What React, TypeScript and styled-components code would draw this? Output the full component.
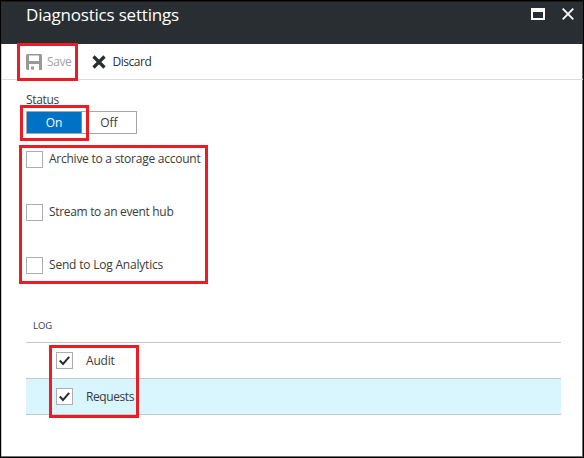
import React from 'react';
import styled, { createGlobalStyle } from 'styled-components';

const GlobalStyle = createGlobalStyle`
  *, *::before, *::after { box-sizing: border-box; }
  body { margin: 0; background: #fff; }
`;

const Blade = styled.div`
  display: flex;
  flex-direction: column;
  width: 584px;
  height: 458px;
  border: 1px solid #000;
  background: #fff;
  box-shadow: inset -1px -1px 0 #6e6f70, inset 1px 0 0 #c9c9c9;
  color: #3b3b3b;
  font: 12px/16px "Open Sans", "Noto Sans", sans-serif;
  white-space: nowrap;
`;

const Header = styled.header`
  display: flex;
  justify-content: space-between;
  flex: none;
  height: 43px;
  padding: 1px 9px 0 25px;
  background: #292e32;
  color: #fff;
  box-shadow: inset 0 1px 0 #17191b;
`;

const Title = styled.h1`
  margin: 0;
  font-size: 17px;
  line-height: 26px;
  font-weight: 400;
  letter-spacing: -0.2px;
`;

const WindowControls = styled.div`
  display: flex;
  gap: 17px;
  padding-top: 6px;
  svg { display: block; }
`;

const Toolbar = styled.div`
  display: flex;
  flex: none;
  gap: 21px;
  height: 36px;
  padding-left: 25px;
  border-bottom: 1px solid #dcdcdc;
`;

const Command = styled.div<{ $muted?: boolean; $gap: number }>`
  position: relative;
  display: flex;
  align-items: center;
  gap: ${p => p.$gap}px;
  color: ${p => (p.$muted ? '#a0a1a2' : '#2d3135')};
  svg { display: block; }
`;

const Highlight = styled.div<{ $inset: string }>`
  position: absolute;
  inset: ${p => p.$inset};
  border: 3px solid #ed1c24;
  pointer-events: none;
`;

const Label = styled.span<{ $spacing?: number }>`
  letter-spacing: ${p => p.$spacing ?? 0}px;
`;

const Content = styled.main`
  display: flex;
  flex-direction: column;
  padding: 12px 21px 0 25px;
`;

const StatusLabel = styled.div`
  height: 19px;
  letter-spacing: -0.35px;
`;

const Toggle = styled.div`
  position: relative;
  display: flex;
  width: 111px;
  height: 23px;
  border: 1px solid #a6a6a6;
`;

const ToggleOption = styled.div<{ $active?: boolean }>`
  width: ${p => (p.$active ? 55 : 54)}px;
  border-right: ${p => (p.$active ? '1px solid #8a8a8a' : 'none')};
  background: ${p => (p.$active ? '#0072c6' : '#fff')};
  color: ${p => (p.$active ? '#fff' : '#3b3b3b')};
  line-height: 22px;
  text-align: center;
`;

const Destinations = styled.div`
  position: relative;
  display: flex;
  flex-direction: column;
  align-self: flex-start;
  gap: 36px;
  width: 182px;
  margin-top: 17px;
`;

const Option = styled.label`
  display: flex;
  gap: 6px;
  height: 17px;
  line-height: 15px;
`;

const CheckBox = styled.span`
  display: flex;
  flex: none;
  width: 17px;
  height: 17px;
  border: 1px solid #adadad;
  background: #fff;
`;

const LogTable = styled.section`
  position: relative;
  display: flex;
  flex-direction: column;
  margin-top: 43px;
  width: 535px;
`;

const LogHeading = styled.div`
  height: 26px;
  padding-left: 7px;
  border-bottom: 1px solid #c8c8c8;
  font-size: 9.5px;
  line-height: 17px;
`;

const LogRow = styled.div<{ $selected?: boolean }>`
  display: flex;
  align-items: center;
  gap: 13px;
  height: 36px;
  padding-left: 30px;
  border-bottom: 1px solid #c8c8c8;
  background: ${p => (p.$selected ? '#d9f5fe' : '#fff')};
`;

const RowLabel = styled(Label)`
  padding-top: 1px;
`;

const SaveIcon = () => (
  <svg width="16" height="16" viewBox="0 0 16 16">
    <path
      fill="#97999b"
      fillRule="evenodd"
      d="M1 0H15L16 1V16H13V10H3V16H1L0 15V1ZM3 1.5V7H13V1.5ZM5 12.5H8V15.5H5Z"
    />
  </svg>
);

const DiscardIcon = () => (
  <svg width="14" height="14" viewBox="0 0 14 14">
    <path d="M1.5 1.5L12.5 12.5M12.5 1.5L1.5 12.5" stroke="#292e32" strokeWidth="3.2" />
  </svg>
);

const MaximizeIcon = () => (
  <svg width="14" height="12" viewBox="0 0 14 12">
    <path fill="#fff" fillRule="evenodd" d="M0 0H14V12H0ZM2 4V10H12V4Z" />
  </svg>
);

const CloseIcon = () => (
  <svg width="12" height="12" viewBox="0 0 12 12">
    <path d="M.7 .7L11.3 11.3M11.3 .7L.7 11.3" stroke="#fff" strokeWidth="1.8" />
  </svg>
);

const CheckMark = () => (
  <svg width="15" height="15" viewBox="0 0 15 15">
    <path d="M2.8 7.5L6 10.9L12.2 3.8" fill="none" stroke="#292e32" strokeWidth="2" />
  </svg>
);

const destinations = [
  { name: 'Archive to a storage account', spacing: -0.25 },
  { name: 'Stream to an event hub', spacing: -0.32 },
  { name: 'Send to Log Analytics', spacing: -0.2 },
];

const logs = [
  { name: 'Audit', spacing: -0.2, selected: false },
  { name: 'Requests', spacing: -0.42, selected: true },
];

export default function App() {
  return (
    <>
      <GlobalStyle />
      <Blade>
        <Header>
          <Title>Diagnostics settings</Title>
          <WindowControls>
            <MaximizeIcon />
            <CloseIcon />
          </WindowControls>
        </Header>
        <Toolbar>
          <Command $muted $gap={5}>
            <SaveIcon />
            <Label $spacing={-0.4}>Save</Label>
            <Highlight $inset="-1px -7px -2px -9px" />
          </Command>
          <Command $gap={6}>
            <DiscardIcon />
            <Label $spacing={-0.45}>Discard</Label>
          </Command>
        </Toolbar>
        <Content>
          <StatusLabel>Status</StatusLabel>
          <Toggle>
            <ToggleOption $active>On</ToggleOption>
            <ToggleOption>Off</ToggleOption>
            <Highlight $inset="-7px 47px -8px -7px" />
          </Toggle>
          <Destinations>
            {destinations.map(d => (
              <Option key={d.name}>
                <CheckBox />
                <Label $spacing={d.spacing}>{d.name}</Label>
              </Option>
            ))}
            <Highlight $inset="-6px 0 -10px -7px" />
          </Destinations>
          <LogTable>
            <LogHeading>LOG</LogHeading>
            {logs.map(l => (
              <LogRow key={l.name} $selected={l.selected}>
                <CheckBox>
                  <CheckMark />
                </CheckBox>
                <RowLabel $spacing={l.spacing}>{l.name}</RowLabel>
              </LogRow>
            ))}
            <Highlight $inset="28px 422px -3px 23px" />
          </LogTable>
        </Content>
      </Blade>
    </>
  );
}
